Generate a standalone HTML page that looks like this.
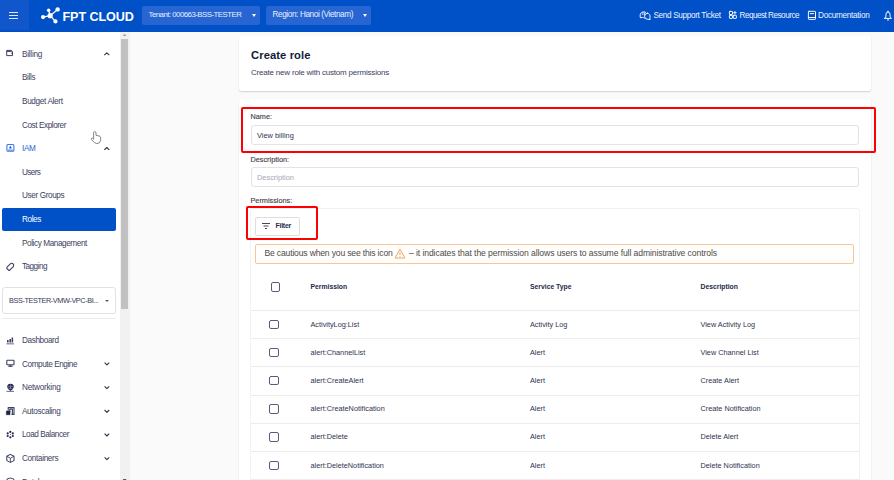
<!DOCTYPE html>
<html><head><meta charset="utf-8">
<style>
*{margin:0;padding:0;box-sizing:border-box}
html,body{width:894px;height:480px;overflow:hidden;background:#fafafa;font-family:"Liberation Sans",sans-serif;color:#3b4060}
.a{position:absolute;white-space:nowrap}
#hdr{position:absolute;left:0;top:0;width:894px;height:31.5px;background:#0050c8}
#ham{position:absolute;left:0;top:0;width:29px;height:30px;background:#1157cb}
.hl{position:absolute;left:9px;width:9px;height:1.3px;background:#dfe8f8}
.dd{position:absolute;top:6px;height:19px;background:#2766d2;border-radius:2px;color:#e8eefa;font-size:8.2px}
.dd span{position:absolute;top:4px}
.caret{position:absolute;top:8px;width:0;height:0;border-left:2.5px solid transparent;border-right:2.5px solid transparent;border-top:3px solid #fff}
.ht{color:#eef3fc;font-size:8.2px;top:10.5px}
#side{position:absolute;left:0;top:32px;width:120px;height:448px;background:#fff}
.si{position:absolute;left:22px;font-size:8.2px;color:#3d4260}
#sb{position:absolute;left:120px;top:32px;width:10px;height:448px;background:#f1f1f1}
#thumb{position:absolute;left:121px;top:38.5px;width:7px;height:270px;background:#c1c1c1}
.card{position:absolute;left:238.5px;width:632.5px;background:#fff;border-radius:3px;box-shadow:0 1px 1.5px rgba(0,0,0,0.16)}
.lbl{position:absolute;left:250.5px;font-size:7.3px;color:#3d3d45;-webkit-text-stroke:0.12px #3d3d45}
.inp{position:absolute;left:250.5px;width:608px;height:20px;border:1px solid #e3e3e3;border-radius:3px;background:#fff}
.red{position:absolute;border:2px solid #ff0000;border-radius:2px}
.row{position:absolute;left:251px;width:608px;height:1px;background:#ececec}
.cb{position:absolute;left:269.2px;width:9.6px;height:9.6px;border:1.6px solid #565c7e;border-radius:2px}
.td{position:absolute;font-size:7.3px;color:#2e3350}
.th{position:absolute;font-size:6.8px;font-weight:bold;color:#252a4a;margin-top:1px}
</style></head><body>
<div id="hdr"></div>
<div id="ham"><div class="hl" style="top:12.2px"></div><div class="hl" style="top:14.9px"></div><div class="hl" style="top:17.5px"></div></div>
<!-- logo -->
<svg class="a" style="left:0;top:0" width="70" height="32" viewBox="0 0 70 32">
 <g stroke="#fff" stroke-width="1.3" fill="none"><path d="M43.05 17.07L50.16 15.7L57.63 9.41M48.64 10.19L50.16 15.7L55.43 21.43"/></g>
 <g fill="#fff"><circle cx="43.05" cy="17.07" r="2.1"/><circle cx="50.16" cy="15.7" r="2.6"/><circle cx="57.63" cy="9.41" r="2.2"/><circle cx="48.64" cy="10.19" r="1.75"/><circle cx="55.43" cy="21.43" r="2.1"/></g>
</svg>
<div class="a" style="left:62.5px;top:10px;font-size:12.6px;font-weight:bold;color:#fff;letter-spacing:-0.1px">FPT CLOUD</div>
<div class="dd" style="left:142px;width:118px"><span style="left:6.5px;letter-spacing:-0.5px;font-size:7.8px">Tenant: 000663-BSS-TESTER</span><div class="caret" style="left:110px"></div></div>
<div class="dd" style="left:266px;width:105px"><span style="left:6.5px;letter-spacing:-0.39px">Region: Hanoi (Vietnam)</span><div class="caret" style="left:96.5px"></div></div>
<!-- header right -->
<svg class="a" style="left:0;top:0" width="894" height="32" viewBox="0 0 894 32">
 <g fill="none" stroke="#fff" stroke-width="0.95" stroke-linejoin="round" stroke-linecap="round">
  <!-- support bubbles -->
  <path d="M645.6 12.3A3.6 3.6 0 0 0 640.3 14.2Q639.9 16.2 640.4 17.8L642.6 17.4Q643.4 17.8 644.4 17.9"/>
  <path d="M647.5 13.2A3 3 0 0 1 649.9 17.3L650.1 19.5L647.8 19.3A3 3 0 1 1 647.5 13.2Z"/>
  <path d="M642.8 12.8V14.8M644.4 12.8V14.8" stroke-width="0.8"/>
  <!-- request grid -->
  <rect x="729.4" y="11.4" width="3.1" height="3.1" rx="0.5"/>
  <rect x="729.4" y="15.3" width="3.1" height="3.1" rx="0.5"/>
  <rect x="733.3" y="15.3" width="3.1" height="3.1" rx="0.5"/>
  <path d="M734.9 11.4V14M733.6 12.7H736.2" stroke-width="0.9"/>
  <!-- doc book -->
  <rect x="808.4" y="11.3" width="7.1" height="8.1" rx="0.6"/>
  <path d="M808.4 17.5H815.5M810.2 13.6H813.6"/>
  <!-- bell -->
  <path d="M884.6 18.4H891.4L890.1 16.9V14.8Q890.1 12 888 12Q885.9 12 885.9 14.8V16.9Z"/>
  <path d="M888 20.3V19" stroke-width="1.1"/>
  <path d="M888 11.1V11.9" stroke-width="1.2"/>
 </g>
</svg>
<div class="a ht" style="left:653.5px;letter-spacing:-0.34px">Send Support Ticket</div>
<div class="a ht" style="left:739.5px;letter-spacing:-0.52px">Request Resource</div>
<div class="a ht" style="left:818px;letter-spacing:-0.28px">Documentation</div>

<!-- sidebar -->
<div id="side"></div>
<div class="si" style="top:50px;letter-spacing:-0.25px">Billing</div>
<div class="si" style="top:73px;letter-spacing:-0.36px">Bills</div>
<div class="si" style="top:97px;letter-spacing:-0.33px">Budget Alert</div>
<div class="si" style="top:121px;letter-spacing:-0.43px">Cost Explorer</div>
<div class="si" style="top:144px;letter-spacing:-0.37px;color:#2a63d0">IAM</div>
<div class="si" style="top:168px;letter-spacing:-0.62px">Users</div>
<div class="si" style="top:191px;letter-spacing:-0.38px">User Groups</div>
<div class="a" style="left:2px;top:207.5px;width:114px;height:23.5px;background:#0050c8;border-radius:2px"></div>
<div class="si" style="top:215px;letter-spacing:-0.40px;color:#fff">Roles</div>
<div class="si" style="top:239px;letter-spacing:-0.41px">Policy Management</div>
<div class="si" style="top:262px;letter-spacing:-0.53px">Tagging</div>
<div class="a" style="left:2px;top:287px;width:114px;height:27px;border:1px solid #e2e2e2;border-radius:3px;background:#fff"></div>
<div class="si" style="left:9px;top:296px;font-size:7.3px;letter-spacing:-0.4px;color:#353a58">BSS-TESTER-VMW-VPC-BI...</div>
<div class="caret" style="left:104.5px;top:299.5px;border-left-width:2px;border-right-width:2px;border-top:2.5px solid #555a70;position:absolute"></div>
<div class="a" style="left:2px;top:318px;width:114px;height:1.2px;background:#ececec"></div>
<div class="si" style="top:336px;letter-spacing:-0.39px">Dashboard</div>
<div class="si" style="top:360px;letter-spacing:-0.42px">Compute Engine</div>
<div class="si" style="top:383px;letter-spacing:-0.24px">Networking</div>
<div class="si" style="top:407px;letter-spacing:-0.35px">Autoscaling</div>
<div class="si" style="top:430px;letter-spacing:-0.45px">Load Balancer</div>
<div class="si" style="top:454px;letter-spacing:-0.34px">Containers</div>
<div class="si" style="top:478px;letter-spacing:-0.36px">Database</div>
<div id="sb"></div>
<div id="thumb"></div>
<svg class="a" style="left:0;top:0" width="894" height="480" viewBox="0 0 894 480">
 <g fill="none" stroke="#3d4260" stroke-width="1.1" stroke-linejoin="round">
  <!-- billing wallet -->
  <path d="M6.7 50.4H11.4L12.5 51.5V55.6H6.7Z" stroke-width="1"/>
  <path d="M6.7 51.3H11.8" stroke-width="1.2"/>
  <path d="M10.9 53.2H12.5" stroke-width="0.8"/>
  <!-- chevrons up -->
  <path d="M104.3 55.2l2.5-2.4 2.5 2.4" stroke="#2f3450" stroke-width="1.1"/>
  <path d="M104.3 149.9l2.5-2.4 2.5 2.4" stroke="#2f3450" stroke-width="1.1"/>
  <!-- tag -->
  <path d="M7 267.2L10.6 263.6Q11.2 263.1 11.8 263.3L13.3 264.1Q13.8 264.6 13.6 265.4L13.3 266.6L9.7 270.2Q9.2 270.6 8.6 270.2L6.9 268.5Q6.6 267.8 7 267.2Z"/>
  <!-- compute monitor -->
  <rect x="6.8" y="360.2" width="7.2" height="4.6" rx="0.6"/>
  <path d="M8.3 366.2H12.6" stroke-width="1.3"/>
  <path d="M10.4 365v1"/>
  <!-- autoscaling -->
  <path d="M8.2 410.5V407.6H14V414.4H11.5"/>
  <path d="M9.8 412V409.1H12.4V414.4"/>
  <rect x="6.4" y="411" width="3.6" height="3.7" fill="#1e2245" stroke="#1e2245" stroke-width="0.6"/>
  <!-- containers cube -->
  <path d="M10.4 454.4L14 456.3V460.6L10.4 462.4L6.8 460.6V456.3Z" stroke-width="1.05"/>
  <path d="M6.8 456.3L10.4 458.2L14 456.3M10.4 458.2V462.4" stroke-width="0.9"/>
  <!-- chevrons down -->
  <path d="M104.6 362.6l2.3 2.3 2.3-2.3" stroke="#2f3450" stroke-width="1.1"/>
  <path d="M104.6 386.3l2.3 2.3 2.3-2.3" stroke="#2f3450" stroke-width="1.1"/>
  <path d="M104.6 410l2.3 2.3 2.3-2.3" stroke="#2f3450" stroke-width="1.1"/>
  <path d="M104.6 433.7l2.3 2.3 2.3-2.3" stroke="#2f3450" stroke-width="1.1"/>
  <path d="M104.6 457.4l2.3 2.3 2.3-2.3" stroke="#2f3450" stroke-width="1.1"/>
 </g>
 <!-- IAM -->
 <g fill="none" stroke="#3d78e0" stroke-width="1.1">
  <rect x="6.9" y="144.5" width="7" height="6.7" rx="1"/>
  <path d="M8 150.1H12.9" stroke-width="1"/>
 </g>
 <path d="M9.2 148.6Q9.3 146 10.4 146Q11.5 146 11.6 148.6Z" fill="#1a5ad8"/>
 <!-- dashboard bars -->
 <g fill="#3d4260">
  <rect x="7" y="340" width="1.6" height="2.5"/>
  <rect x="9.4" y="339" width="1.6" height="3.5"/>
  <rect x="11.6" y="337.5" width="1.5" height="5"/>
  <rect x="6.5" y="343" width="7.5" height="1.5" fill="#9a9db0"/>
 </g>
 <!-- networking globe -->
 <g fill="#252a4e">
  <path d="M10.5 383.8A3.3 3.3 0 0 1 13.8 387.1Q13.8 389 10.5 391Q7.2 389 7.2 387.1A3.3 3.3 0 0 1 10.5 383.8Z"/>
 </g>
 <path d="M7.6 386.6H13.4M8.2 388.4H12.8M10.5 384.5V389" stroke="#9ca0b8" stroke-width="0.6"/>
 <path d="M6.5 391.4H14" stroke="#5a5e78" stroke-width="0.9"/>
 <!-- load balancer dots -->
 <g fill="#252a4e">
  <circle cx="10.3" cy="431.9" r="1.1"/><circle cx="10.3" cy="437.3" r="1.1"/>
  <circle cx="7.7" cy="433.4" r="1.1"/><circle cx="12.8" cy="433.4" r="1.1"/>
  <circle cx="7.7" cy="436" r="1.1"/><circle cx="12.8" cy="436" r="1.1"/>
  <circle cx="10.3" cy="434.6" r="0.5"/>
 </g>
 <!-- partial next icon -->
 <path d="M7 480V479Q10.4 477 13.8 479V480" fill="none" stroke="#3d4260" stroke-width="1"/>
 <!-- scrollbar arrows -->
 <path d="M122.6 36L124.6 33.8L126.6 36Z" fill="#a3a3a3"/>
 <path d="M122.6 479L124.6 481.2L126.6 479Z" fill="#505050"/>
 <!-- hand cursor -->
 <path d="M93.6 139.2V132.4Q94.8 130.6 96 132.4V135.3L99.8 136.2Q100.6 136.6 100.6 137.4V140.6Q100 143.6 96.8 143.6Q94.6 143.6 91.3 139.3Q91 138 92.4 138.2Z" fill="#fff" stroke="#6e6e6e" stroke-width="0.85" stroke-linejoin="round"/>
</svg>

<!-- main -->
<div class="card" style="top:35.5px;height:55.5px"></div>
<div class="a" style="left:251px;top:49px;font-size:11.2px;font-weight:bold;color:#141a3a;letter-spacing:0.1px">Create role</div>
<div class="a" style="left:251px;top:68px;font-size:8px;color:#3b4060;letter-spacing:-0.2px">Create new role with custom permissions</div>
<div class="card" style="top:99px;height:400px"></div>
<div class="red" style="left:241px;top:107px;width:635px;height:46px"></div>
<div class="lbl" style="top:111.5px">Name:</div>
<div class="inp" style="top:125px"></div>
<div class="a" style="left:257px;top:131px;font-size:7.4px;color:#2e3350">View billing</div>
<div class="lbl" style="top:155px">Description:</div>
<div class="inp" style="top:167px"></div>
<div class="a" style="left:257px;top:173px;font-size:7.4px;color:#a4a8b8">Description</div>
<div class="lbl" style="top:195.5px">Permissions:</div>
<div class="a" style="left:250px;top:208px;width:609.5px;height:300px;border:1px solid #f2f2f2;border-radius:3px"></div>
<div class="red" style="left:246px;top:206px;width:71.8px;height:33.6px"></div>
<div class="a" style="left:255px;top:216.5px;width:44.5px;height:19px;border:1px solid #dedede;border-radius:2px;background:#fff"></div>
<svg class="a" style="left:261px;top:222px" width="10" height="8" viewBox="0 0 10 8"><g stroke="#2e3350" stroke-width="0.9"><path d="M1 1.5h8M2.5 4h5M4 6.5h2"/></g></svg>
<div class="a" style="left:275.5px;top:221.5px;font-size:7px;font-weight:bold;color:#2a2f4a;letter-spacing:-0.28px">Filter</div>
<div class="a" style="left:255.2px;top:244px;width:598.8px;height:19.8px;border:1px solid #f5c79b;border-radius:2px;background:#fffefc"></div>
<div class="a" style="left:264.5px;top:248px;font-size:8.6px;color:#4f4a46;letter-spacing:-0.18px">Be cautious when you see this icon</div>
<svg class="a" style="left:394px;top:248px" width="12" height="11" viewBox="0 0 12 11"><path d="M6 1l5 9h-10z" stroke="#ef9a4f" stroke-width="0.9" fill="none"/><path d="M6 4v3M6 8v0.8" stroke="#ef9a4f" stroke-width="0.9"/></svg>
<div class="a" style="left:409px;top:248px;font-size:8.6px;color:#4f4a46;letter-spacing:-0.09px">– it indicates that the permission allows users to assume full administrative controls</div>
<div class="cb" style="top:282px;left:270.7px"></div>
<div class="th" style="left:310.5px;top:282px">Permission</div>
<div class="th" style="left:530px;top:282px">Service Type</div>
<div class="th" style="left:700.5px;top:282px">Description</div>
<div class="row" style="top:310px"></div>
<div class="cb" style="top:319.5px"></div>
<div class="td" style="left:310.5px;top:319.5px">ActivityLog:List</div><div class="td" style="left:530px;top:319.5px">Activity Log</div><div class="td" style="left:700.5px;top:319.5px">View Activity Log</div>
<div class="row" style="top:338px"></div>
<div class="cb" style="top:347.5px"></div>
<div class="td" style="left:310.5px;top:347.5px">alert:ChannelList</div><div class="td" style="left:530px;top:347.5px">Alert</div><div class="td" style="left:700.5px;top:347.5px">View Channel List</div>
<div class="row" style="top:366.3px"></div>
<div class="cb" style="top:375.5px"></div>
<div class="td" style="left:310.5px;top:375.5px">alert:CreateAlert</div><div class="td" style="left:530px;top:375.5px">Alert</div><div class="td" style="left:700.5px;top:375.5px">Create Alert</div>
<div class="row" style="top:394.5px"></div>
<div class="cb" style="top:404px"></div>
<div class="td" style="left:310.5px;top:404px">alert:CreateNotification</div><div class="td" style="left:530px;top:404px">Alert</div><div class="td" style="left:700.5px;top:404px">Create Notification</div>
<div class="row" style="top:422.6px"></div>
<div class="cb" style="top:432px"></div>
<div class="td" style="left:310.5px;top:432px">alert:Delete</div><div class="td" style="left:530px;top:432px">Alert</div><div class="td" style="left:700.5px;top:432px">Delete Alert</div>
<div class="row" style="top:450.8px"></div>
<div class="cb" style="top:460.5px"></div>
<div class="td" style="left:310.5px;top:460.5px">alert:DeleteNotification</div><div class="td" style="left:530px;top:460.5px">Alert</div><div class="td" style="left:700.5px;top:460.5px">Delete Notification</div>
<div class="row" style="top:478.8px"></div>
</body></html>
